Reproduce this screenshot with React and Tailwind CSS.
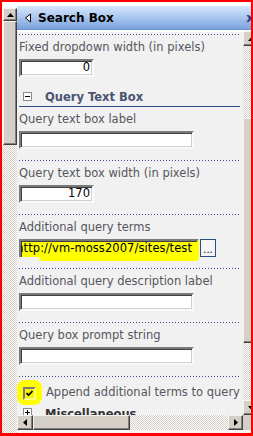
import React from "react";

const font = { fontFamily: '"DejaVu Sans", Verdana, sans-serif' };

const checker =
  "bg-[repeating-conic-gradient(#d4d0c8_0_25%,#ffffff_0_50%)] bg-[length:2px_2px]";

const Btn = ({ className = "", children }) => (
  <div
    className={`bg-[#d4d0c8] border border-t-[#f4f3ee] border-l-[#f4f3ee] border-b-[#404040] border-r-[#404040] shadow-[inset_-1px_-1px_0_#808080] flex items-center justify-center shrink-0 ${className}`}
  >
    {children}
  </div>
);

const Arrow = ({ dir }) => {
  const pts = {
    up: "0,4 7,4 3.5,0",
    down: "0,0 7,0 3.5,4",
    left: "4,0 4,7 0,3.5",
    right: "0,0 0,7 4,3.5",
  }[dir];
  const vertical = dir === "up" || dir === "down";
  return (
    <svg width={vertical ? 7 : 4} height={vertical ? 4 : 7} viewBox={vertical ? "0 0 7 4" : "0 0 4 7"}>
      <polygon points={pts} fill="#000" />
    </svg>
  );
};

const Dotted = () => (
  <div className="h-px w-[221px] bg-[linear-gradient(to_right,#3b4f8c_1px,transparent_1px)] bg-[length:3px_1px]" />
);

const Field = ({ label, width, value }) => (
  <>
    <div className="mt-[5px] leading-[14px] text-[11.5px] text-[#56565e] whitespace-nowrap">{label}</div>
    <div
      className={`mt-[5px] h-[18px] ${width} bg-white border-2 border-t-[#7a7a7a] border-l-[#7a7a7a] border-b-[#fafafa] border-r-[#fafafa] shadow-[inset_1px_1px_0_#404040,inset_-1px_-1px_0_#d4d0c8] flex items-center justify-end pr-[2px] text-[11.5px] text-black`}
    >
      {value}
    </div>
    <div className="h-[11px]" />
  </>
);

const Toggle = ({ sign }) => (
  <div className="w-[9px] h-[9px] border border-[#8a8a8a] bg-white flex items-center justify-center shrink-0">
    <div className="relative w-[5px] h-px bg-black">
      {sign === "+" && <div className="absolute left-[2px] -top-[2px] w-px h-[5px] bg-black" />}
    </div>
  </div>
);

export default function App() {
  return (
    <div className="w-[253px] h-[436px] border-2 border-b-[3px] border-[#ff0000] bg-white flex overflow-hidden" style={font}>
      {/* outer scrollbar */}
      <div className="w-[15px] flex flex-col pt-[6px] pl-px">
        <Btn className="h-[13px] w-[14px]">
          <Arrow dir="up" />
        </Btn>
        <Btn className="h-[124px] w-[14px]" />
        <div className={`flex-1 -ml-px ${checker}`} />
      </div>

      {/* tool pane */}
      <div className="w-[234px] flex flex-col pt-[4px]">
        <div className="h-[24px] flex items-center bg-linear-to-b from-[#d8e7fb] via-[#a8c6ef] to-[#7aa2db] border-b border-[#6d93cc]">
          <svg width="12" height="12" viewBox="0 0 12 12" className="ml-[5px] mr-[4px]">
            <polygon points="8.5,2 8.5,10 3.5,6" fill="#fff" stroke="#000" strokeWidth="1" />
          </svg>
          <span className="text-[12px] font-bold text-black leading-none">Search Box</span>
          <span className="ml-auto mr-[-3px] text-[12px] font-bold text-[#1d3c8a] leading-none">x</span>
        </div>

        <div className="h-[385px] flex">
          {/* content */}
          <div className="w-[226px] bg-[#f1f1f1] border-t-2 border-white overflow-hidden pl-[2px] pt-[2px]">
            <Dotted />
            <Field label="Fixed dropdown width (in pixels)" width="w-[75px]" value="0" />

            <div className="-mt-[1px] h-[20px] w-[221px] flex items-center border-b border-[#2f4b8a]">
              <div className="ml-[4px]">
                <Toggle sign="-" />
              </div>
              <span className="ml-[13px] mt-[2px] text-[11.5px] font-bold text-[#4a5470]">Query Text Box</span>
            </div>

            <Field label="Query text box label" width="w-[175px]" value="" />
            <Dotted />
            <Field label="Query text box width (in pixels)" width="w-[75px]" value="170" />
            <Dotted />

            <div className="mt-[5px] leading-[14px] text-[11.5px] text-[#56565e]">Additional query terms</div>
            <div className="mt-[5px] flex items-start">
              <div className="relative">
                <div className="absolute left-[20px] right-0 -bottom-[4px] h-[7px] rounded-full bg-[#ffff00]" />
                <div className="relative h-[18px] w-[180px] bg-[#ffff00] border-2 border-b-0 border-t-[#7a7a7a] border-l-[#7a7a7a] border-r-[#ffff00] shadow-[inset_1px_1px_0_#404040] overflow-hidden flex items-center justify-end pr-[5px] text-[11.5px] tracking-[0.08px] text-black whitespace-nowrap">
                  <span className="shrink-0">http://vm-moss2007/sites/test</span>
                </div>
              </div>
              <div className="ml-px h-[18px] w-[16px] border border-[#2f4b8a] bg-[#f4f4f4] flex items-end justify-center text-[10px] leading-[13px] text-black">
                ...
              </div>
            </div>
            <div className="h-[11px]" />
            <Dotted />
            <Field label="Additional query description label" width="w-[175px]" value="" />
            <Dotted />
            <Field label="Query box prompt string" width="w-[175px]" value="" />
            <Dotted />

            <div className="mt-[8px] h-[16px] flex items-center">
              <div className="relative ml-[4px] w-[13px] h-[13px]">
                <div className="absolute -left-[6px] -top-[7px] w-[25px] h-[25px] rounded-[8px] bg-[#ffff00]" />
                <div className="relative w-[13px] h-[13px] bg-[#f4f400] border-2 border-t-[#7a7a7a] border-l-[#7a7a7a] border-b-[#ffff80] border-r-[#ffff80] flex items-center justify-center">
                  <svg width="7" height="7" viewBox="0 0 7 7">
                    <polyline points="0.5,3 2.5,5 6.5,1" fill="none" stroke="#000" strokeWidth="1.6" />
                  </svg>
                </div>
              </div>
              <span className="ml-[10px] text-[11.5px] text-[#56565e] whitespace-nowrap">Append additional terms to query</span>
            </div>
            <div className="mt-[4px] h-[16px] flex items-center">
              <div className="ml-[4px] -mt-[2px]">
                <Toggle sign="+" />
              </div>
              <span className="ml-[13px] mt-[3px] text-[11.5px] font-bold text-[#333]">Miscellaneous</span>
            </div>
          </div>

          {/* inner vertical scrollbar, clipped */}
          <div className="w-[8px] overflow-hidden pt-px">
            <div className="w-[16px] h-full flex flex-col">
              <Btn className="h-[15px] w-[16px]">
                <Arrow dir="up" />
              </Btn>
              <div className={`h-[72px] ${checker}`} />
              <Btn className="h-[225px] w-[16px]" />
              <div className={`flex-1 ${checker}`} />
              <Btn className="h-[15px] w-[16px]">
                <Arrow dir="down" />
              </Btn>
            </div>
          </div>
        </div>

        {/* horizontal scrollbar */}
        <div className="h-[15px] flex">
          <Btn className="w-[16px] h-[15px]">
            <Arrow dir="left" />
          </Btn>
          <Btn className="w-[97px] h-[15px]" />
          <div className={`flex-1 ${checker}`} />
          <Btn className="w-[15px] h-[15px]">
            <Arrow dir="right" />
          </Btn>
          <div className="w-[8px] bg-[#d4d0c8]" />
        </div>
        <div className="flex-1 bg-[#f7f7f7]" />
      </div>
    </div>
  );
}
